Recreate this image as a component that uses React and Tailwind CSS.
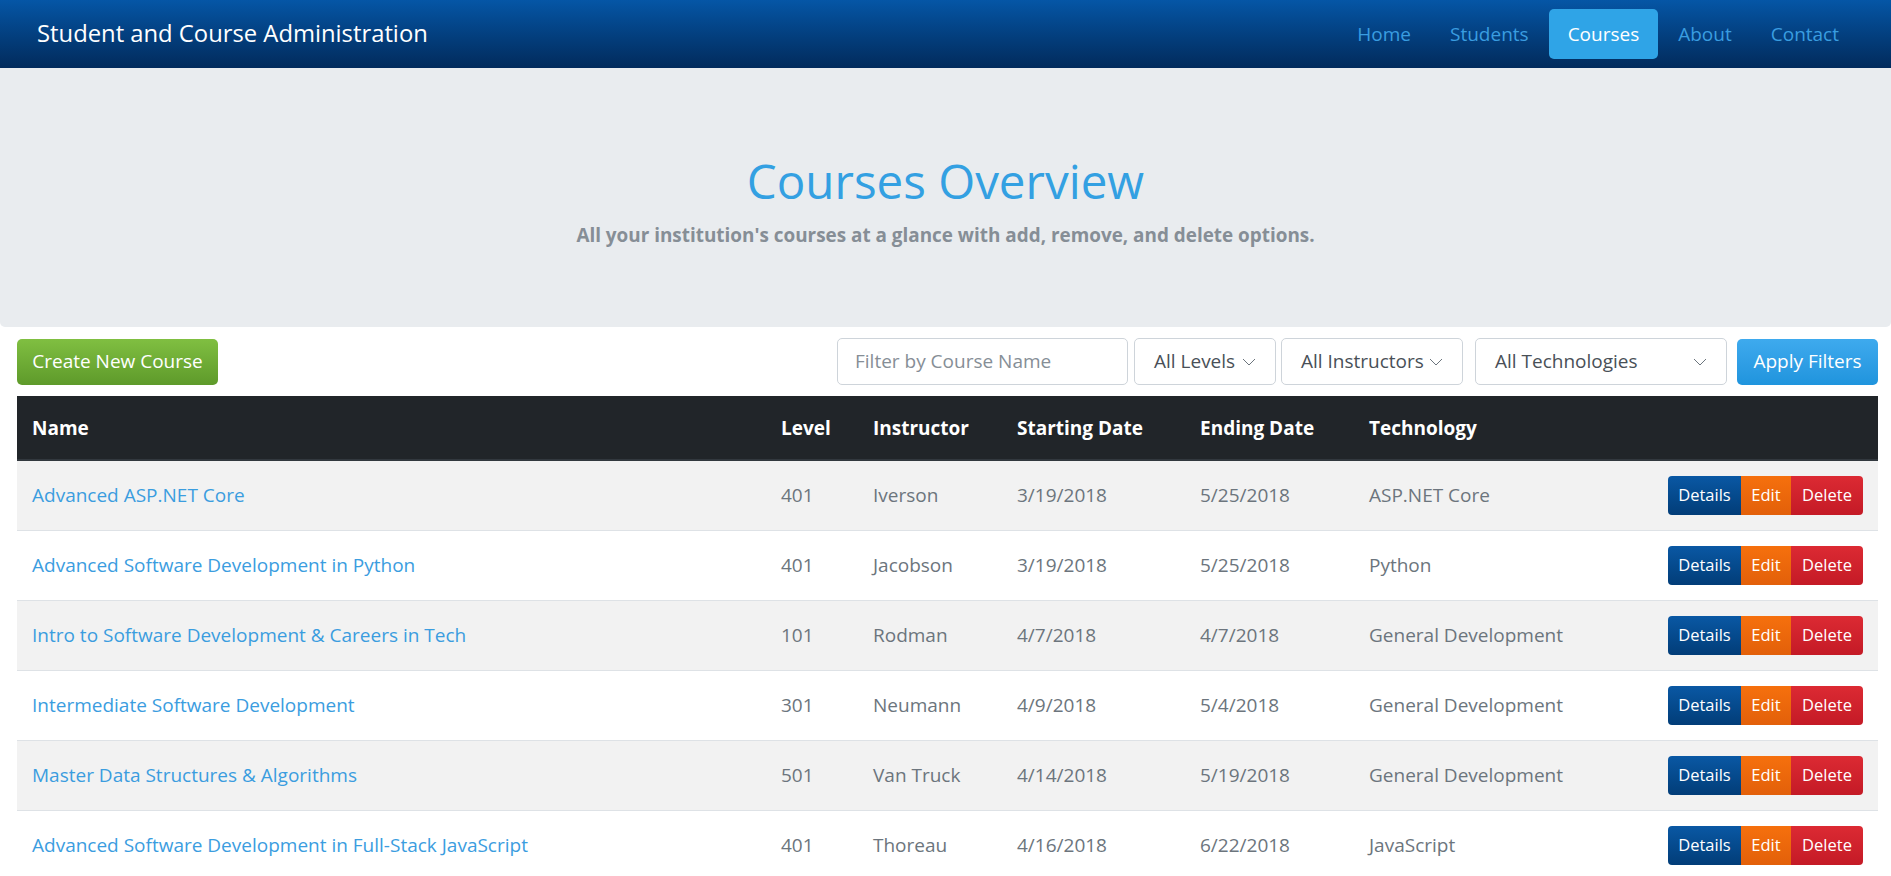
import React from 'react';

const courses = [
  { id: 1, name: 'Advanced ASP.NET Core', level: 401, instructor: 'Iverson', start: '3/19/2018', end: '5/25/2018', tech: 'ASP.NET Core' },
  { id: 2, name: 'Advanced Software Development in Python', level: 401, instructor: 'Jacobson', start: '3/19/2018', end: '5/25/2018', tech: 'Python' },
  { id: 3, name: 'Intro to Software Development & Careers in Tech', level: 101, instructor: 'Rodman', start: '4/7/2018', end: '4/7/2018', tech: 'General Development' },
  { id: 4, name: 'Intermediate Software Development', level: 301, instructor: 'Neumann', start: '4/9/2018', end: '5/4/2018', tech: 'General Development' },
  { id: 5, name: 'Master Data Structures & Algorithms', level: 501, instructor: 'Van Truck', start: '4/14/2018', end: '5/19/2018', tech: 'General Development' },
  { id: 6, name: 'Advanced Software Development in Full-Stack JavaScript', level: 401, instructor: 'Thoreau', start: '4/16/2018', end: '6/22/2018', tech: 'JavaScript' },
];

const navLinks = ['Home', 'Students', 'Courses', 'About', 'Contact'];

const Chevron = () => (
  <svg width="14" height="8" viewBox="0 0 14 8" fill="none" className="shrink-0">
    <polyline points="1,1 7,7 13,1" stroke="#6c757d" strokeWidth="1" />
  </svg>
);

const SelectBox = ({ label, className }) => (
  <div className={`h-[47px] flex items-center justify-between px-[19px] bg-white border border-[#ced4da] rounded-[5px] text-[#495057] text-[19px] ${className}`}>
    <span>{label}</span>
    <Chevron />
  </div>
);

const App = () => {
  return (
    <div className="min-h-screen bg-white font-['Open_Sans',sans-serif]">
      {/* Navbar */}
      <nav className="h-[68px] flex items-center justify-between pl-[37px] pr-[33px] bg-gradient-to-b from-[#0556a6] to-[#022b5c]">
        <span className="text-white text-[23.8px]">Student and Course Administration</span>
        <ul className="flex items-center gap-[1px]">
          {navLinks.map((link) => (
            <li key={link}>
              <a
                className={`flex items-center h-[50px] px-[19px] rounded-[5px] text-[19px] ${
                  link === 'Courses' ? 'bg-[#2fa4e7] text-white' : 'text-[#3a9de0]'
                }`}
              >
                {link}
              </a>
            </li>
          ))}
        </ul>
      </nav>

      {/* Jumbotron */}
      <div className="h-[259px] bg-[#e9ecef] rounded-b-[5px] flex flex-col items-center pt-[83px]">
        <h1 className="text-[47.5px] leading-[60px] text-[#33a0e2] font-normal">Courses Overview</h1>
        <p className="mt-[9px] text-[18.9px] leading-[30px] font-bold text-[#868e96]">
          All your institution's courses at a glance with add, remove, and delete options.
        </p>
      </div>

      <div className="pl-[17px] pr-[13px]">
        {/* Toolbar */}
        <div className="mt-[11px] flex items-center justify-between">
          <button className="h-[46px] w-[201px] rounded-[5px] text-white text-[19px] bg-gradient-to-b from-[#80bf41] to-[#5e9a2a]">
            Create New Course
          </button>
          <div className="flex items-center">
            <div className="h-[47px] w-[291px] flex items-center px-[17px] border border-[#ced4da] rounded-[5px] text-[19px] text-[#868e96]">
              Filter by Course Name
            </div>
            <SelectBox label="All Levels" className="ml-[6px] w-[142px]" />
            <SelectBox label="All Instructors" className="ml-[5px] w-[182px]" />
            <SelectBox label="All Technologies" className="ml-[12px] w-[252px]" />
            <button className="ml-[10px] h-[46px] w-[141px] rounded-[5px] text-white text-[19px] bg-gradient-to-b from-[#3eaaee] to-[#1f94dd]">
              Apply Filters
            </button>
          </div>
        </div>

        {/* Table */}
        <table className="mt-[11px] w-full table-fixed border-collapse text-[19px]">
          <colgroup>
            <col className="w-[749px]" />
            <col className="w-[92px]" />
            <col className="w-[144px]" />
            <col className="w-[183px]" />
            <col className="w-[169px]" />
            <col className="w-[280px]" />
            <col />
          </colgroup>
          <thead>
            <tr className="h-[64px] bg-[#212529] text-white font-bold text-left border-b-2 border-[#32383e]">
              <th className="px-[15px] pt-[2px]">Name</th>
              <th className="px-[15px] pt-[2px]">Level</th>
              <th className="px-[15px] pt-[2px]">Instructor</th>
              <th className="px-[15px] pt-[2px]">Starting Date</th>
              <th className="px-[15px] pt-[2px]">Ending Date</th>
              <th className="px-[15px] pt-[2px]">Technology</th>
              <th className="px-[15px]"></th>
            </tr>
          </thead>
          <tbody>
            {courses.map((c, i) => (
              <tr key={c.id} className={`h-[70px] border-t border-[#dee2e6] text-[#6c757d] ${i % 2 === 0 ? 'bg-[#f2f2f2]' : 'bg-white'}`}>
                <td className="px-[15px] text-[#3b9ddf] whitespace-nowrap">{c.name}</td>
                <td className="px-[15px]">{c.level}</td>
                <td className="px-[15px]">{c.instructor}</td>
                <td className="px-[15px]">{c.start}</td>
                <td className="px-[15px]">{c.end}</td>
                <td className="px-[15px] whitespace-nowrap">{c.tech}</td>
                <td className="px-[15px]">
                  <div className="flex justify-end text-white text-[16.5px]">
                    <button className="h-[39px] w-[73px] rounded-l-[4px] bg-gradient-to-b from-[#0a58a4] to-[#023d78]">Details</button>
                    <button className="h-[39px] w-[50px] bg-gradient-to-b from-[#f6700d] to-[#e2600a]">Edit</button>
                    <button className="h-[39px] w-[72px] rounded-r-[4px] bg-gradient-to-b from-[#dc2a33] to-[#c41a26]">Delete</button>
                  </div>
                </td>
              </tr>
            ))}
          </tbody>
        </table>
      </div>
    </div>
  );
};

export default App;
